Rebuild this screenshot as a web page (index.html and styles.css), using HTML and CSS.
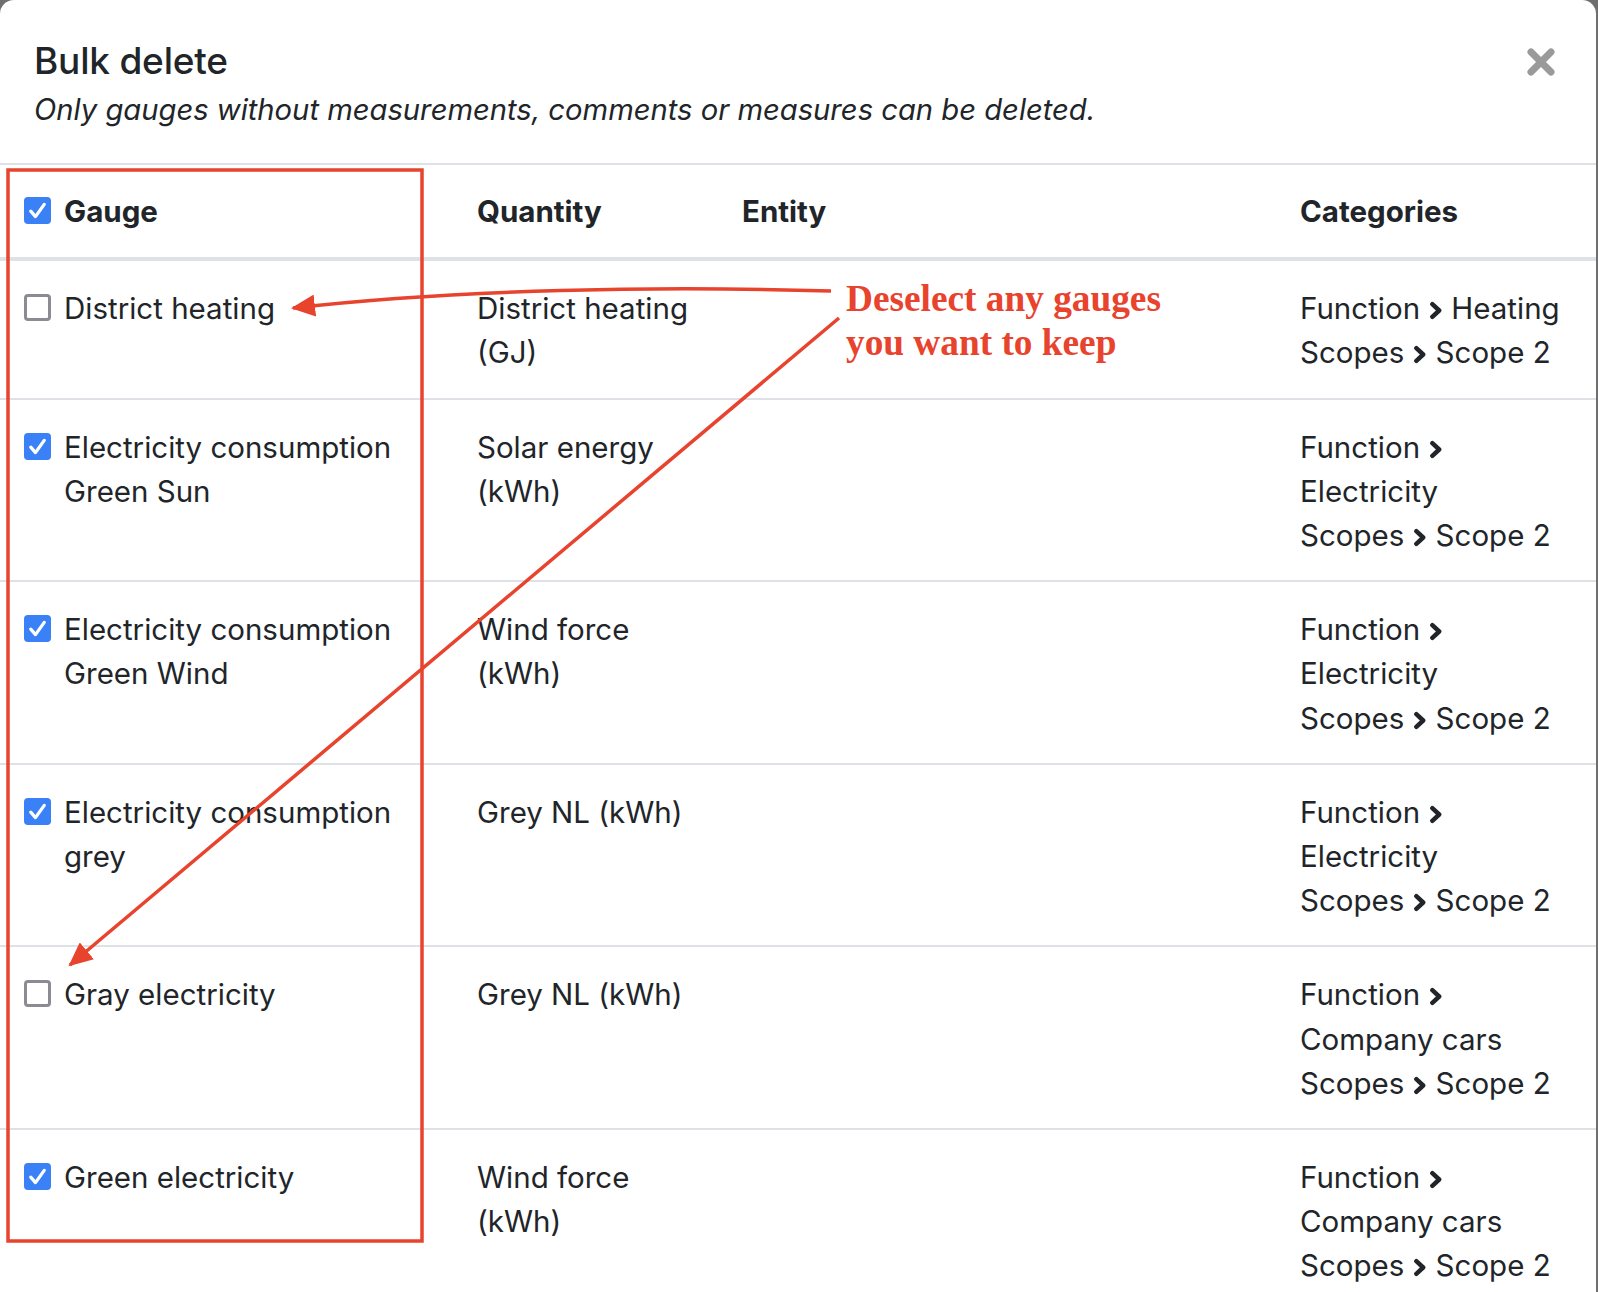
FILE: index.html
```html
<!DOCTYPE html>
<html lang="en">
<head>
    <meta charset="UTF-8">
    <meta name="viewport" content="width=device-width, initial-scale=1.0">
    <title>Bulk delete</title>
    <link rel="stylesheet" href="styles.css">
</head>
<body>
    <div class="modal">
        <header class="modal-header">
            <div>
                <h2 class="modal-title">Bulk delete</h2>
                <p class="modal-note">Only gauges without measurements, comments or measures can be deleted.</p>
            </div>
            <button class="close" aria-label="Close">
                <svg width="30" height="30" viewBox="0 0 30 30"><path d="M5 5 L25 25 M25 5 L5 25"/></svg>
            </button>
        </header>
        <table class="gauges">
            <colgroup>
                <col class="col-gauge">
                <col class="col-qty">
                <col class="col-entity">
                <col class="col-cat">
            </colgroup>
            <thead>
                <tr>
                    <th><div class="pick"><span class="box on"><svg viewBox="0 0 20 20"><path d="M5 10.5 L8.5 14.5 L15 5.5"/></svg></span><span>Gauge</span></div></th>
                    <th>Quantity</th>
                    <th>Entity</th>
                    <th>Categories</th>
                </tr>
            </thead>
            <tbody>
                <tr>
                    <td><div class="pick"><span class="box"></span><span>District heating</span></div></td>
                    <td>District heating (GJ)</td>
                    <td></td>
                    <td>
                        <div><span class="nb">Function<svg class="chev" viewBox="0 0 12 18"><path d="M3 3 L9.5 9 L3 15"/></svg></span> Heating</div>
                        <div><span class="nb">Scopes<svg class="chev" viewBox="0 0 12 18"><path d="M3 3 L9.5 9 L3 15"/></svg></span> Scope 2</div>
                    </td>
                </tr>
                <tr>
                    <td><div class="pick"><span class="box on"><svg viewBox="0 0 20 20"><path d="M5 10.5 L8.5 14.5 L15 5.5"/></svg></span><span>Electricity consumption Green Sun</span></div></td>
                    <td>Solar energy (kWh)</td>
                    <td></td>
                    <td>
                        <div><span class="nb">Function<svg class="chev" viewBox="0 0 12 18"><path d="M3 3 L9.5 9 L3 15"/></svg></span> Electricity</div>
                        <div><span class="nb">Scopes<svg class="chev" viewBox="0 0 12 18"><path d="M3 3 L9.5 9 L3 15"/></svg></span> Scope 2</div>
                    </td>
                </tr>
                <tr>
                    <td><div class="pick"><span class="box on"><svg viewBox="0 0 20 20"><path d="M5 10.5 L8.5 14.5 L15 5.5"/></svg></span><span>Electricity consumption Green Wind</span></div></td>
                    <td>Wind force (kWh)</td>
                    <td></td>
                    <td>
                        <div><span class="nb">Function<svg class="chev" viewBox="0 0 12 18"><path d="M3 3 L9.5 9 L3 15"/></svg></span> Electricity</div>
                        <div><span class="nb">Scopes<svg class="chev" viewBox="0 0 12 18"><path d="M3 3 L9.5 9 L3 15"/></svg></span> Scope 2</div>
                    </td>
                </tr>
                <tr>
                    <td><div class="pick"><span class="box on"><svg viewBox="0 0 20 20"><path d="M5 10.5 L8.5 14.5 L15 5.5"/></svg></span><span>Electricity consumption grey</span></div></td>
                    <td>Grey NL (kWh)</td>
                    <td></td>
                    <td>
                        <div><span class="nb">Function<svg class="chev" viewBox="0 0 12 18"><path d="M3 3 L9.5 9 L3 15"/></svg></span> Electricity</div>
                        <div><span class="nb">Scopes<svg class="chev" viewBox="0 0 12 18"><path d="M3 3 L9.5 9 L3 15"/></svg></span> Scope 2</div>
                    </td>
                </tr>
                <tr>
                    <td><div class="pick"><span class="box"></span><span>Gray electricity</span></div></td>
                    <td>Grey NL (kWh)</td>
                    <td></td>
                    <td>
                        <div><span class="nb">Function<svg class="chev" viewBox="0 0 12 18"><path d="M3 3 L9.5 9 L3 15"/></svg></span> Company cars</div>
                        <div><span class="nb">Scopes<svg class="chev" viewBox="0 0 12 18"><path d="M3 3 L9.5 9 L3 15"/></svg></span> Scope 2</div>
                    </td>
                </tr>
                <tr>
                    <td><div class="pick"><span class="box on"><svg viewBox="0 0 20 20"><path d="M5 10.5 L8.5 14.5 L15 5.5"/></svg></span><span>Green electricity</span></div></td>
                    <td>Wind force (kWh)</td>
                    <td></td>
                    <td>
                        <div><span class="nb">Function<svg class="chev" viewBox="0 0 12 18"><path d="M3 3 L9.5 9 L3 15"/></svg></span> Company cars</div>
                        <div><span class="nb">Scopes<svg class="chev" viewBox="0 0 12 18"><path d="M3 3 L9.5 9 L3 15"/></svg></span> Scope 2</div>
                    </td>
                </tr>
            </tbody>
        </table>
    </div>

    <!-- screenshot annotation drawn over the dialog -->
    <div class="markup">
        <svg class="markup-lines" width="1598" height="1292" viewBox="0 0 1598 1292">
            <defs>
                <marker id="head" markerUnits="userSpaceOnUse" markerWidth="26" markerHeight="22" refX="22" refY="11" orient="auto">
                    <path d="M0 0 L24 11 L0 22 Z"/>
                </marker>
            </defs>
            <rect x="8" y="170" width="414" height="1071"/>
            <path d="M831 291 C 660 286, 460 289, 293 308" marker-end="url(#head)"/>
            <path d="M839 318 L 70 965" marker-end="url(#head)"/>
        </svg>
        <p class="markup-note">Deselect any gauges<br>you want to keep</p>
    </div>
</body>
</html>
```

FILE: styles.css
```css
*,
*::before,
*::after {
    box-sizing: border-box;
    padding: 0;
    margin: 0;
}

body {
    position: relative;
    width: 1598px;
    height: 1292px;
    overflow: hidden;
    background-color: #6f6f6f;
    font-family: Inter, "Noto Sans", sans-serif;
    color: #212529;
}

.modal {
    width: 1596px;
    min-height: 1292px;
    background-color: white;
    border-top-left-radius: 14px;
    border-top-right-radius: 14px;
}

.modal-header {
    display: flex;
    justify-content: space-between;
    align-items: flex-start;
    padding: 32px 40px 33px 34px;
    border-bottom: 2px solid #dee2e6;
}

.modal-title {
    font-size: 37px;
    font-weight: 500;
    line-height: 58px;
    letter-spacing: -0.2px;
}

.modal-note {
    font-size: 29.2px;
    font-style: italic;
    line-height: 40px;
}

.close {
    margin-top: 15px;
    border: none;
    background: none;
    width: 30px;
    height: 30px;
}
.close svg path {
    stroke: #9a9a9a;
    stroke-width: 7;
    stroke-linecap: round;
}

.gauges {
    width: 1596px;
    table-layout: fixed;
    border-collapse: collapse;
    font-size: 29.5px;
    line-height: 44.2px;
}
.col-gauge { width: 453px; }
.col-qty { width: 265px; }
.col-entity { width: 558px; }
.col-cat { width: 320px; }

.gauges th,
.gauges td {
    padding: 24px 24px 24px 24px;
    text-align: left;
    vertical-align: top;
}
.gauges th {
    font-weight: 700;
    border-bottom: 4px solid #dee2e6;
}
.gauges td {
    padding-top: 25px;
    padding-bottom: 23px;
    border-bottom: 2px solid #dee2e6;
}

.pick {
    display: flex;
    gap: 13px;
}

.box {
    flex: none;
    width: 27px;
    height: 27px;
    margin-top: 8px;
    border: 3px solid #8b8b93;
    border-radius: 4px;
    background-color: white;
}
.box.on {
    border: none;
    background-color: #3a80f6;
}
.box svg {
    display: block;
    width: 27px;
    height: 27px;
}
.box svg path {
    fill: none;
    stroke: white;
    stroke-width: 2.4;
    stroke-linecap: round;
    stroke-linejoin: round;
}

.nb {
    white-space: nowrap;
}
.chev {
    width: 13px;
    height: 19px;
    margin: 0 1px 0 9px;
    vertical-align: -1px;
}
.chev path {
    fill: none;
    stroke: #212529;
    stroke-width: 4.2;
    stroke-linecap: round;
    stroke-linejoin: round;
}

.markup {
    position: absolute;
    top: 0;
    left: 0;
    width: 1598px;
    height: 1292px;
    pointer-events: none;
}
.markup-lines {
    position: absolute;
    top: 0;
    left: 0;
}
.markup-lines rect,
.markup-lines > path {
    fill: none;
    stroke: #e8432d;
    stroke-width: 3.5;
}
.markup-lines marker path {
    fill: #e8432d;
}
.markup-note {
    position: absolute;
    left: 846px;
    top: 277px;
    font-family: "Liberation Serif", serif;
    font-weight: 700;
    font-size: 37.3px;
    line-height: 44px;
    color: #e8432d;
}
```
